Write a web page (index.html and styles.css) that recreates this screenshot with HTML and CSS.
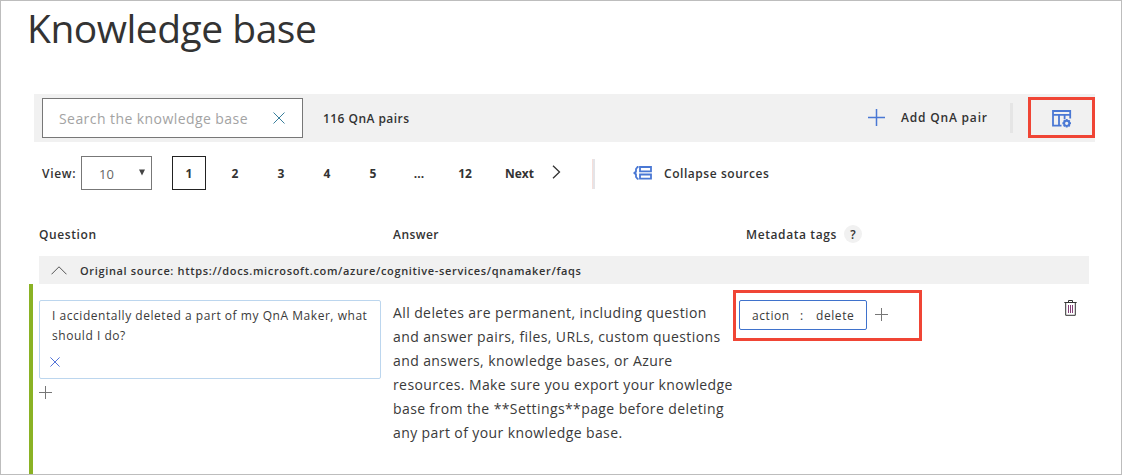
FILE: index.html
```html
<!DOCTYPE html>
<html lang="en">
<head>
<meta charset="utf-8">
<title>Knowledge base</title>
<link rel="stylesheet" href="styles.css">
</head>
<body>
<main class="page">
  <h1 class="title">Knowledge base</h1>

  <section class="toolbar">
    <div class="search">
      <span class="search-hint">Search the knowledge base</span>
      <svg class="search-clear" width="12" height="12" viewBox="0 0 12 12"><path d="M.5.5l11 11M11.5.5l-11 11"/></svg>
    </div>
    <span class="count">116 QnA pairs</span>
    <div class="add">
      <svg width="17" height="17" viewBox="0 0 17 17"><path d="M8.5 0v17M0 8.5h17"/></svg>
      <span class="add-label">Add QnA pair</span>
    </div>
    <div class="bar-divider"></div>
    <div class="view-options">
      <svg width="20" height="18" viewBox="0 0 20 18">
        <path class="line" d="M9.5 15.6H1V1h17.2v7.5M1 4.8h17.2M7 4.8v10.8M12.6 4.8v4.5"/>
        <g class="gear"><circle cx="14.7" cy="13.3" r="2.6"/><path d="M14.7 9v1.6M14.7 16v1.6M10.4 13.3H12M17.4 13.3H19M11.7 10.3l1.1 1.1M16.6 15.2l1.1 1.1M17.7 10.3l-1.1 1.1M12.8 15.2l-1.1 1.1"/></g>
      </svg>
      <div class="highlight"></div>
    </div>
  </section>

  <nav class="pager">
    <span class="view-label">View:</span>
    <div class="select"><span>10</span><svg width="6" height="7" viewBox="0 0 6 7"><path d="M0 .5h6L3 6.5z"/></svg></div>
    <div class="pages">
      <span class="num current">1</span><span class="num">2</span><span class="num">3</span><span class="num">4</span><span class="num">5</span><span class="num">...</span><span class="num">12</span>
    </div>
    <span class="next">Next</span>
    <svg class="next-icon" width="9" height="14" viewBox="0 0 9 14"><path d="M1 .7L7.5 7 1 13.3"/></svg>
    <div class="pager-divider"></div>
    <svg class="collapse-icon" width="20" height="14" viewBox="0 0 20 14"><path d="M7 1H18v4.3H7zM7 8.5H18v4.2H7zM5.5 1H4.6L3 3v2.3L1.2 7 3 8.7V11l1.6 1.8h.9M1 7h2.5"/></svg>
    <span class="collapse-label">Collapse sources</span>
  </nav>

  <div class="grid heads">
    <span>Question</span>
    <span class="head-answer">Answer</span>
    <div class="head-meta"><span>Metadata tags</span><span class="help">?</span></div>
  </div>

  <div class="source">
    <svg width="16" height="9" viewBox="0 0 16 9"><path d="M.5 8.3L8 .8l7.5 7.5"/></svg>
    <span>Original source: https://docs.microsoft.com/azure/cognitive-services/qnamaker/faqs</span>
  </div>

  <div class="grid pair">
    <div>
      <div class="question">
        <p>I accidentally deleted a part of my QnA Maker, what<br>should I do?</p>
        <svg width="10" height="10" viewBox="0 0 10 10"><path d="M.4.4l9.2 9.2M9.6.4L.4 9.6"/></svg>
      </div>
      <svg class="plus" width="13" height="13" viewBox="0 0 13 13"><path d="M6.5 0v13M0 6.5h13"/></svg>
    </div>
    <p class="answer">All deletes are permanent, including question<br>and answer pairs, files, URLs, custom questions<br>and answers, knowledge bases, or Azure<br>resources. Make sure you export your knowledge<br>base from the **Settings**page before deleting<br>any part of your knowledge base.</p>
    <div class="meta">
      <div class="tag"><span class="tag-name">action</span><span class="tag-colon">:</span><span>delete</span></div>
      <svg class="plus" width="13" height="13" viewBox="0 0 13 13"><path d="M6.5 0v13M0 6.5h13"/></svg>
      <div class="highlight"></div>
    </div>
    <svg class="trash" width="13" height="16" viewBox="0 0 13 16"><path d="M.3 2.5h12.4M4.5 2.5v-2h4v2M1.7 2.5v12.8h9.6V2.5"/><path class="ribs" d="M4.5 5v8M6.5 5v8M8.5 5v8"/></svg>
  </div>
</main>
</body>
</html>
```
FILE: styles.css
```css
* { box-sizing: border-box; }
body { margin: 0; background: #fff; }
h1, p { margin: 0; font-weight: 400; }
svg { display: block; flex: none; fill: none; stroke: #555; }

.page {
  width: 1122px;
  height: 475px;
  overflow: hidden;
  border: 1px solid #bdbdbd;
  padding-left: 28px;
  font: 600 12px/20px "Open Sans", sans-serif;
  color: #333;
  white-space: nowrap;
}

.title {
  margin-left: -2px;
  height: 93px;
  font-size: 39px;
  line-height: 53px;
  letter-spacing: -.5px;
  color: #333;
}

.toolbar {
  display: flex;
  align-items: center;
  width: 1061px;
  height: 48px;
  margin-left: 5px;
  padding-left: 8px;
  background: #f1f1f1;
}
.search {
  display: flex;
  align-items: center;
  width: 261px;
  height: 40px;
  padding-left: 16px;
  border: 1px solid #777;
  background: #fff;
}
.search-hint { width: 214px; margin-top: 1px; font-weight: 400; font-size: 14px; letter-spacing: .43px; color: #a3a3a3; }
.search-clear { stroke: #3a7f9c; margin-top: -1px; }
.count { width: 545px; margin: 1px 0 0 20px; letter-spacing: .45px; }
.add { display: flex; align-items: center; width: 142px; }
.add svg { stroke: #4a78d4; stroke-width: 1.5; margin-top: -2px; }
.add-label { margin: -1px 0 0 16px; letter-spacing: .81px; }
.bar-divider { width: 3px; height: 30px; background: #e5e5e5; margin-top: -1px; }
.view-options { position: relative; width: 67px; height: 41px; margin: -2px 0 0 15px; padding: 13px 0 0 24px; }
.view-options svg { stroke: #4a78d4; stroke-width: 1.8; }
.gear { stroke-width: 1.9; }
.highlight { position: absolute; border: 3px solid #f04535; }
.view-options .highlight { inset: 0; }

.pager { display: flex; align-items: center; height: 34px; margin: 14px 0 0 13px; }
.view-label { width: 39px; margin-top: 2px; letter-spacing: .7px; }
.select {
  display: flex;
  align-items: center;
  justify-content: space-between;
  width: 71px;
  height: 34px;
  padding: 1px 6px 0 17px;
  border: 1px solid #777;
  font-weight: 400;
  font-size: 13px;
  color: #666;
}
.select svg { fill: #444; stroke: none; margin-top: -3px; }
.pages { display: flex; gap: 12px; margin-left: 20px; }
.num { width: 34px; height: 34px; line-height: 36px; text-align: center; font-weight: 700; }
.current { border: 1px solid #222; line-height: 34px; }
.next { margin: 2px 0 0 23px; width: 47px; font-weight: 700; }
.next-icon { stroke: #333; stroke-width: 1.3; margin-top: -2px; }
.pager-divider { width: 3px; height: 30px; margin: 2px 0 0 31px; background: #e4e4e8; border-left: 1px solid #f6dfda; }
.collapse-icon { margin: -1px 0 0 38px; stroke: #4a78d4; stroke-width: 1.8; }
.collapse-label { margin: 2px 0 0 11px; letter-spacing: .55px; }

.grid { display: grid; grid-template-columns: 354px 346px 325px auto; }
.heads { height: 66px; margin-left: 10px; padding-top: 35px; letter-spacing: .6px; }
.head-answer { letter-spacing: .45px; }
.head-meta { display: flex; padding-left: 7px; }
.help {
  width: 18px;
  height: 18px;
  margin: 0 0 0 7px;
  border-radius: 50%;
  background: #f1f1f1;
  line-height: 19px;
  text-align: center;
  letter-spacing: 0;
}

.source {
  display: flex;
  align-items: center;
  width: 1050px;
  height: 28px;
  margin-left: 10px;
  padding-left: 12px;
  background: #f1f1f1;
  font-size: 11px;
  letter-spacing: .656px;
}
.source span { margin: 1px 0 0 13px; }

.pair { height: 190px; border-left: 4px solid #8ab224; padding: 16px 0 0 6px; color: #3a3a3a; }
.question {
  width: 342px;
  height: 79px;
  padding: 5px 0 0 12px;
  border: 1px solid #bcd6ee;
  border-radius: 2px;
  font-weight: 400;
  letter-spacing: .54px;
}
.question svg { margin: 11px 0 0 -2px; stroke: #5273d8; }
.plus { stroke: #777; margin-top: 7px; }
.answer { padding-top: 1px; font-size: 14px; line-height: 24px; letter-spacing: .4px; }
.meta { position: relative; display: flex; }
.tag {
  display: flex;
  width: 128px;
  height: 30px;
  padding-left: 12px;
  border: 1px solid #3f72cc;
  border-radius: 2px;
  font-weight: 400;
  line-height: 29px;
  letter-spacing: .58px;
}
.tag-name { width: 48px; }
.tag-colon { width: 16px; }
.meta .plus { margin: 8px 0 0 8px; }
.meta .highlight { left: -6px; top: -10px; width: 189px; height: 51px; }
.trash { stroke: #333; }
.ribs { stroke: #844078; }
```
